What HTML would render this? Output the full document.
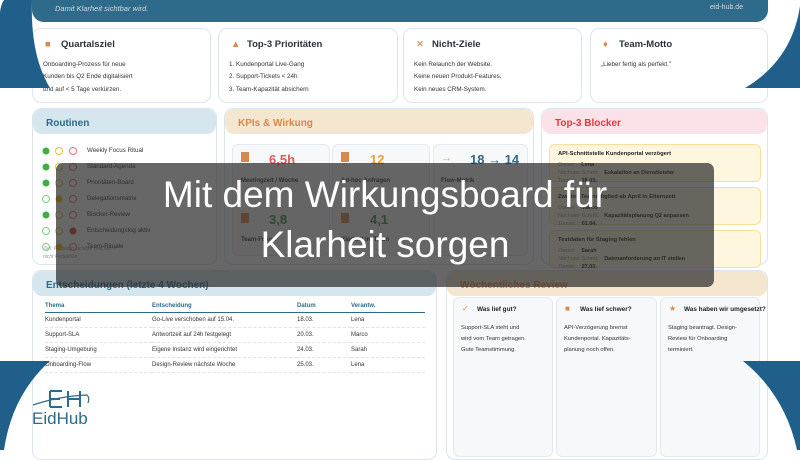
<!DOCTYPE html>
<html><head><meta charset="utf-8"><style>
*{margin:0;padding:0;box-sizing:border-box}
body{width:800px;height:450px;overflow:hidden;background:#fff;font-family:"Liberation Sans",sans-serif;position:relative;color:#2b3440}
.abs{position:absolute}
.card{position:absolute;border:1px solid #dce5ee;border-radius:9px;background:#fff}
.ct{position:absolute;left:12px;top:10px;font-size:9.5px;font-weight:bold;color:#27323e}
.ct i{display:inline-block;width:16px;font-style:normal;color:#d9874a}
.cx{position:absolute;left:10px;top:30px;font-size:6.3px;line-height:12.3px;color:#333}
.band{position:absolute;left:0;right:0;top:0;height:25px;border-radius:9px;font-size:10px;font-weight:bold;padding:9px 0 0 13px}
.rl{position:absolute;left:54px;font-size:6.2px;color:#333}
.tile{position:absolute;background:#f6f8fa;border:1px solid #e3e9ef;border-radius:6px}
.bl{position:absolute;left:549px;width:212px;height:38px;background:#fef6de;border:1px solid #f6df9c;border-radius:6px;font-size:5.5px;padding:6px 0 0 8px}
.bl b{display:block;font-size:5.8px;color:#222;margin-bottom:4px}
.bl span{display:block;color:#999;line-height:8px}
.bl span em{font-style:normal;color:#222;font-weight:bold;margin-left:4px}
table{position:absolute;left:45px;top:300px;width:380px;border-collapse:collapse;font-size:6px}
th{text-align:left;color:#2e6a8a;font-weight:bold;padding:3px 0;border-bottom:1px solid #2e6a8a}
td{padding:4.4px 0 3.6px;border-bottom:1px dashed #e3e3e3;color:#333}
.rv{position:absolute;top:297px;height:160px;background:#f6f8fa;border:1px solid #e3e9ef;border-radius:6px}
.rv b{position:absolute;left:23px;top:8px;font-size:6.4px;color:#222;white-space:nowrap}
.rv i{position:absolute;left:8px;top:6px;font-style:normal;color:#d9874a;font-size:8px}
.rv p{position:absolute;left:7px;top:25px;font-size:5.8px;line-height:11px;color:#333}
</style></head><body>
<div class="abs" style="left:32px;top:-10px;width:736px;height:32px;background:#2e6a8a;border-radius:0 0 12px 12px"></div>
<div class="abs" style="left:55px;top:4px;font-size:7.5px;font-style:italic;color:#cfdde6">Damit Klarheit sichtbar wird.</div>
<div class="abs" style="left:710px;top:4px;font-size:7px;color:#cfdde6">eid-hub.de</div>

<div class="card" style="left:32px;top:28px;width:179px;height:75px"><div class="ct"><i>■</i>Quartalsziel</div><div class="cx">Onboarding-Prozess für neue<br>Kunden bis Q2 Ende digitalisiert<br>und auf &lt; 5 Tage verkürzen.</div></div>
<div class="card" style="left:218px;top:28px;width:180px;height:75px"><div class="ct"><i>▲</i>Top-3 Prioritäten</div><div class="cx">1. Kundenportal Live-Gang<br>2. Support-Tickets &lt; 24h<br>3. Team-Kapazität absichern</div></div>
<div class="card" style="left:403px;top:28px;width:179px;height:75px"><div class="ct"><i style="font-weight:normal">✕</i>Nicht-Ziele</div><div class="cx">Kein Relaunch der Website.<br>Keine neuen Produkt-Features.<br>Kein neues CRM-System.</div></div>
<div class="card" style="left:590px;top:28px;width:178px;height:75px"><div class="ct"><i>♦</i>Team-Motto</div><div class="cx">„Lieber fertig als perfekt."</div></div>

<div class="card" style="left:32px;top:108px;width:185px;height:157px"><div class="band" style="background:#d5e6ef;color:#2e6a8a">Routinen</div>
<div class="rl" style="top:38px">Weekly Focus Ritual</div><div class="rl" style="top:54px">Standard-Agenda</div><div class="rl" style="top:70px">Prioritäten-Board</div><div class="rl" style="top:86px">Delegationsmatrix</div><div class="rl" style="top:102px">Blocker-Review</div><div class="rl" style="top:118px">Entscheidungslog aktiv</div><div class="rl" style="top:134px">Team-Rituale</div>
<div class="abs" style="left:10px;top:136px;font-size:5px;font-style:italic;color:#999;line-height:8px">Ziel: Routinen sichtbar machen –<br>nicht Perfektion</div>
</div>
<svg class="abs" style="left:40px;top:145px" width="40" height="110">
<g stroke-width="1">
<circle cx="6" cy="6" r="3.5" fill="#3fae49"/><circle cx="19" cy="6" r="3.5" fill="none" stroke="#f2c230"/><circle cx="33" cy="6" r="3.5" fill="none" stroke="#e57373"/>
<circle cx="6" cy="22" r="3.5" fill="#3fae49"/><circle cx="19" cy="22" r="3.5" fill="none" stroke="#f2c230"/><circle cx="33" cy="22" r="3.5" fill="none" stroke="#e57373"/>
<circle cx="6" cy="38" r="3.5" fill="#3fae49"/><circle cx="19" cy="38" r="3.5" fill="none" stroke="#f2c230"/><circle cx="33" cy="38" r="3.5" fill="none" stroke="#e57373"/>
<circle cx="6" cy="54" r="3.5" fill="none" stroke="#7ccf83"/><circle cx="19" cy="54" r="3.5" fill="#f2b90f"/><circle cx="33" cy="54" r="3.5" fill="none" stroke="#e57373"/>
<circle cx="6" cy="70" r="3.5" fill="#3fae49"/><circle cx="19" cy="70" r="3.5" fill="none" stroke="#f2c230"/><circle cx="33" cy="70" r="3.5" fill="none" stroke="#e57373"/>
<circle cx="6" cy="86" r="3.5" fill="none" stroke="#7ccf83"/><circle cx="19" cy="86" r="3.5" fill="none" stroke="#f2c230"/><circle cx="33" cy="86" r="3.5" fill="#e53935"/>
<circle cx="6" cy="102" r="3.5" fill="none" stroke="#7ccf83"/><circle cx="19" cy="102" r="3.5" fill="#f2b90f"/><circle cx="33" cy="102" r="3.5" fill="none" stroke="#e57373"/>
</g></svg>

<div class="card" style="left:224px;top:108px;width:310px;height:157px"><div class="band" style="background:#f5e6d0;color:#d9874a">KPIs &amp; Wirkung</div></div>
<div class="tile" style="left:232px;top:144px;width:98px;height:112px"></div>
<div class="tile" style="left:332px;top:144px;width:98px;height:112px"></div>
<div class="tile" style="left:433px;top:144px;width:95px;height:112px"></div>
<div class="abs" style="left:241px;top:152px;width:8px;height:10px;background:#d9874a"></div>
<div class="abs" style="left:269px;top:152px;font-size:13px;font-weight:bold;color:#e05a5a">6,5h</div>
<div class="abs" style="left:241px;top:178px;font-size:6px;font-weight:bold">Meetingzeit / Woche</div>
<div class="abs" style="left:341px;top:152px;width:8px;height:10px;background:#d9874a"></div>
<div class="abs" style="left:370px;top:152px;font-size:13px;font-weight:bold;color:#f0a030">12</div>
<div class="abs" style="left:341px;top:178px;font-size:6px;font-weight:bold">Ad-hoc-Anfragen</div>
<div class="abs" style="left:441px;top:152px;font-size:11px;color:#e8a070">→</div>
<div class="abs" style="left:470px;top:152px;font-size:13px;font-weight:bold;color:#2e6a8a">18 → 14</div>
<div class="abs" style="left:441px;top:178px;font-size:6px;font-weight:bold">Flow-Metrik</div>
<div class="abs" style="left:241px;top:213px;width:8px;height:10px;background:#d9874a"></div>
<div class="abs" style="left:269px;top:212px;font-size:13px;font-weight:bold;color:#3a8a3e">3,8</div>
<div class="abs" style="left:241px;top:237px;font-size:6px;font-weight:bold">Team-Fokus</div>
<div class="abs" style="left:341px;top:213px;width:8px;height:10px;background:#d9874a"></div>
<div class="abs" style="left:370px;top:212px;font-size:13px;font-weight:bold;color:#3a8a3e">4,1</div>
<div class="abs" style="left:341px;top:237px;font-size:6px;font-weight:bold">Klarheit im Team</div>

<div class="card" style="left:541px;top:108px;width:227px;height:157px"><div class="band" style="background:#fbe2e8;color:#e5383b">Top-3 Blocker</div></div>
<div class="bl" style="top:144px"><b>API-Schnittstelle Kundenportal verzögert</b><span>Owner: <em>Lena</em></span><span>Nächster Schritt: <em>Eskalation an Dienstleister</em></span><span>Termin: <em>28.03.</em></span></div>
<div class="bl" style="top:187px"><b>Zweites Teammitglied ab April in Elternzeit</b><span>Owner: <em>Marco</em></span><span>Nächster Schritt: <em>Kapazitätsplanung Q2 anpassen</em></span><span>Termin: <em>01.04.</em></span></div>
<div class="bl" style="top:230px"><b>Testdaten für Staging fehlen</b><span>Owner: <em>Sarah</em></span><span>Nächster Schritt: <em>Datenanforderung an IT stellen</em></span><span>Termin: <em>27.03.</em></span></div>

<div class="card" style="left:32px;top:270px;width:405px;height:190px"><div class="band" style="background:#d5e6ef;color:#2e6a8a">Entscheidungen (letzte 4 Wochen)</div></div>
<table><tr><th style="width:107px">Thema</th><th style="width:145px">Entscheidung</th><th style="width:54px">Datum</th><th>Verantw.</th></tr>
<tr><td>Kundenportal</td><td>Go-Live verschoben auf 15.04.</td><td>18.03.</td><td>Lena</td></tr>
<tr><td>Support-SLA</td><td>Antwortzeit auf 24h festgelegt</td><td>20.03.</td><td>Marco</td></tr>
<tr><td>Staging-Umgebung</td><td>Eigene Instanz wird eingerichtet</td><td>24.03.</td><td>Sarah</td></tr>
<tr><td>Onboarding-Flow</td><td>Design-Review nächste Woche</td><td>25.03.</td><td>Lena</td></tr></table>

<div class="card" style="left:446px;top:270px;width:322px;height:190px"><div class="band" style="background:#f5e6d0;color:#d9874a">Wöchentliches Review</div></div>
<div class="rv" style="left:453px;width:100px"><i>✓</i><b>Was lief gut?</b><p>Support-SLA steht und<br>wird vom Team getragen.<br>Gute Teamstimmung.</p></div>
<div class="rv" style="left:556px;width:101px"><i>■</i><b>Was lief schwer?</b><p>API-Verzögerung bremst<br>Kundenportal. Kapazitäts-<br>planung noch offen.</p></div>
<div class="rv" style="left:660px;width:100px"><i>★</i><b>Was haben wir umgesetzt?</b><p>Staging beantragt. Design-<br>Review für Onboarding<br>terminiert.</p></div>

<svg class="abs" style="left:0;top:0" width="800" height="450">
<path d="M4,0 L32,0 Q30,55 50,88 L0,88 L0,12 Q1,4 4,0 Z" fill="#1f5f8a"/>
<path d="M800,6 Q792,60 745,88 L800,88 Z" fill="#1f5f8a"/>
<path d="M0,361 L50,361 Q12,395 4,450 L0,450 Z" fill="#1f5f8a"/>
<path d="M743,361 L800,361 L800,450 L797,450 Q785,395 743,361 Z" fill="#1f5f8a"/>
</svg>

<svg class="abs" style="left:30px;top:388px" width="65" height="40">
<path d="M20,3 H32 M20,3 V19 M20,11 H30 M20,19 H32 M38,3 V19 M50,3 V19 M38,11 H50" stroke="#2e6a8a" stroke-width="2" fill="none"/>
<path d="M3,17 Q30,8 57,7 Q60,10 58,15" stroke="#2e6a8a" stroke-width="1.2" fill="none"/>
<text x="2" y="36" font-family="Liberation Sans,sans-serif" font-size="17" fill="#2e6a8a">EidHub</text>
</svg>

<div class="abs" style="left:56px;top:163px;width:658px;height:124px;background:rgba(45,45,45,0.72);border-radius:7px"></div>
<div class="abs" style="left:56px;top:170px;width:658px;text-align:center;color:#fff;font-size:37px;line-height:50px">Mit dem Wirkungsboard für<br>Klarheit sorgen</div>
</body></html>
